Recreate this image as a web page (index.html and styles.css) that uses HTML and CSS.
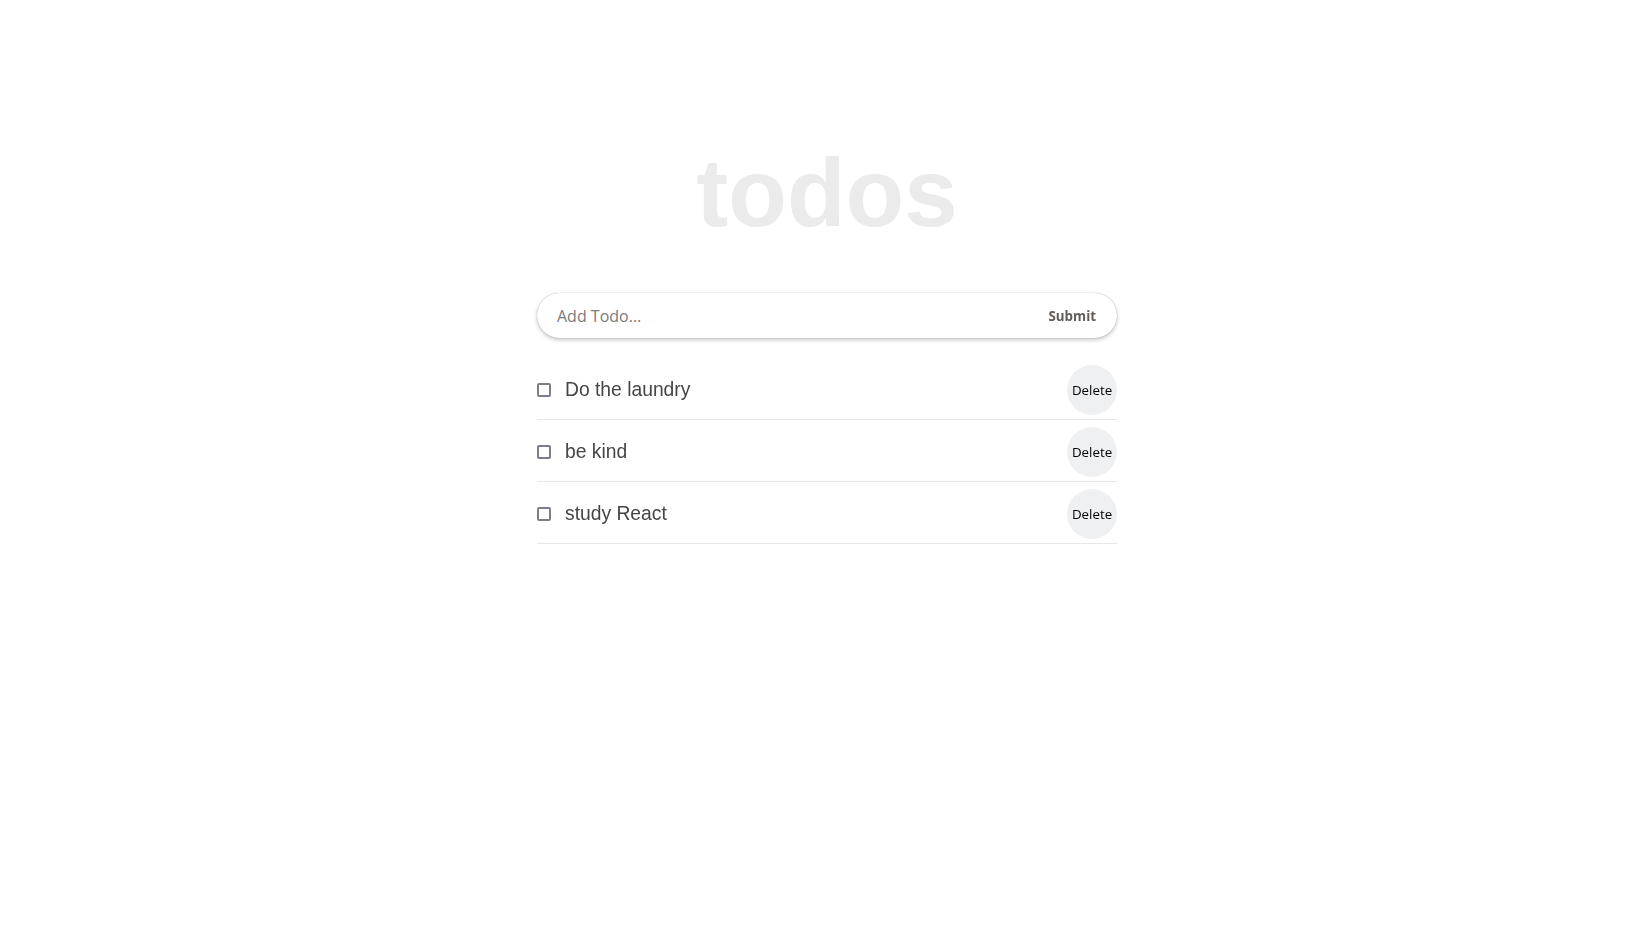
FILE: index.html
```html
<!DOCTYPE html>
<html lang="en">
<head>
<meta charset="utf-8">
<title>todos</title>
<link rel="stylesheet" href="styles.css">
</head>
<body>
<main class="app">
  <h1 class="title">todos</h1>
  <form class="add-form">
    <input class="add-input" type="text" placeholder="Add Todo..." autofocus>
    <button class="submit-btn" type="button">Submit</button>
  </form>
  <ul class="todo-list">
    <li class="todo-item">
      <input class="todo-check" type="checkbox">
      <span class="todo-text">Do the laundry</span>
      <button class="delete-btn" type="button">Delete</button>
    </li>
    <li class="todo-item">
      <input class="todo-check" type="checkbox">
      <span class="todo-text">be kind</span>
      <button class="delete-btn" type="button">Delete</button>
    </li>
    <li class="todo-item">
      <input class="todo-check" type="checkbox">
      <span class="todo-text">study React</span>
      <button class="delete-btn" type="button">Delete</button>
    </li>
  </ul>
</main>
</body>
</html>
```

FILE: styles.css
```css
* { box-sizing: border-box; }

html, body {
  margin: 0;
  padding: 0;
  background: #ffffff;
}

body {
  font-family: "Liberation Sans", Arial, sans-serif;
  padding-left: 4px;
}

.app {
  width: 580px;
  margin: 0 auto;
  padding-top: 145px;
  display: flex;
  flex-direction: column;
}

.title {
  margin: 0;
  font-family: "Liberation Sans", Arial, sans-serif;
  font-weight: 700;
  font-size: 96px;
  line-height: 96px;
  text-align: center;
  color: #ebebeb;
}

.add-form {
  margin-top: 52px;
  height: 45px;
  display: flex;
  align-items: center;
  border-radius: 23px;
  background: #fff;
  box-shadow: 0 0 1px rgba(0, 0, 0, 0.35), 0 2px 4px rgba(0, 0, 0, 0.22);
  padding: 0 21px 0 20px;
}

.add-input {
  flex: 1;
  border: none;
  outline: none;
  background: transparent;
  font-family: "Open Sans", sans-serif;
  font-size: 16px;
  color: #333;
  padding: 0;
  height: 100%;
  caret-color: #000;
}

.add-input::placeholder {
  color: #7a7a7a;
}

.submit-btn {
  border: none;
  background: transparent;
  font-family: "Open Sans", sans-serif;
  font-weight: 700;
  font-size: 13.333px;
  color: #635c57;
  padding: 0;
  cursor: pointer;
}

.todo-list {
  list-style: none;
  margin: 20px 0 0;
  padding: 0;
}

.todo-item {
  display: flex;
  align-items: center;
  padding: 7px 0 4px;
  border-bottom: 1px solid #e6e6e6;
}

.todo-check {
  appearance: none;
  -webkit-appearance: none;
  margin: 0 14px 0 0;
  width: 14px;
  height: 14px;
  border: 2px solid #7e7e8a;
  border-radius: 2px;
  background: #fff;
}

.todo-text {
  flex: 1;
  font-size: 19.3px;
  color: #454545;
}

.delete-btn {
  width: 50px;
  height: 50px;
  border-radius: 50%;
  border: none;
  background: #eff0f2;
  font-family: "Open Sans", sans-serif;
  font-size: 13.333px;
  color: #000;
  padding: 0;
  cursor: pointer;
}
```
